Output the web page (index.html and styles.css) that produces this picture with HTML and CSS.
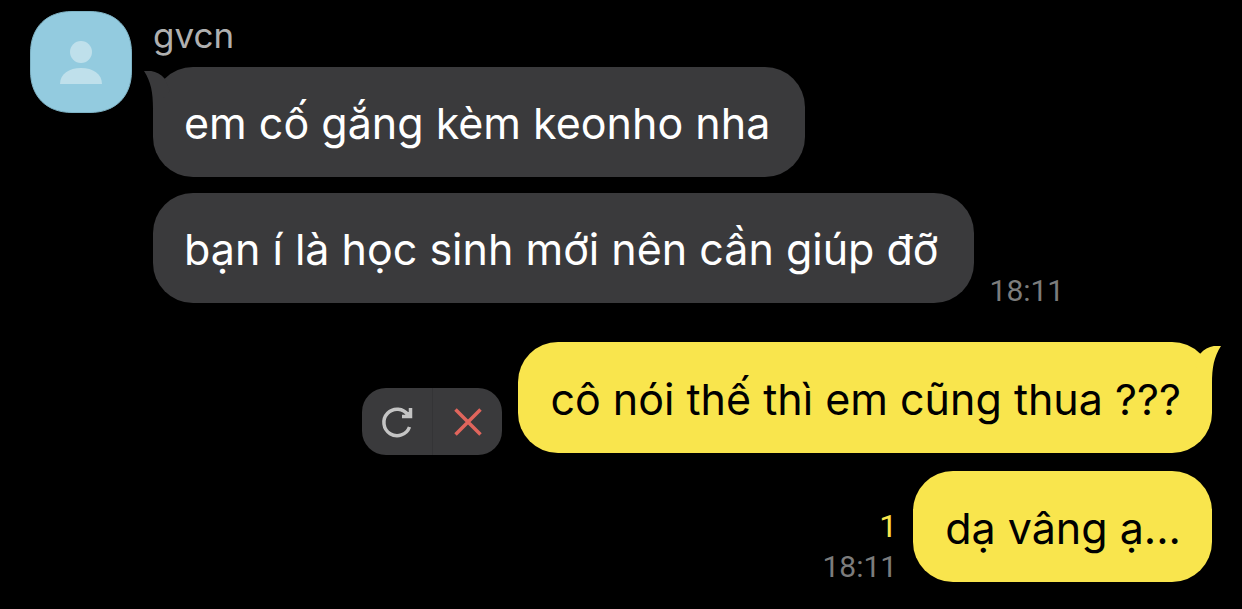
FILE: index.html
```html
<!DOCTYPE html>
<html lang="vi">
<head>
    <meta charset="UTF-8">
    <meta name="viewport" content="width=device-width, initial-scale=1.0">
    <title>gvcn</title>
    <link rel="stylesheet" href="styles.css">
</head>
<body>
    <main class="chat">
        <section class="group received">
            <svg class="avatar" viewBox="0 0 102 102" aria-hidden="true">
                <path class="avatar-bg" d="M42 .5H60C86 .5 101.5 17 101.5 42V60C101.5 85 86 101.5 60 101.5H42C16 101.5 .5 85 .5 60V42C.5 17 16 .5 42 .5Z"/>
                <circle class="avatar-person" cx="51" cy="41" r="11"/>
                <path class="avatar-person" d="M30 73C30 63 39 57 51 57S72 63 72 73Z"/>
            </svg>
            <div class="messages">
                <h2 class="sender">gvcn</h2>
                <div class="message">
                    <p class="bubble">
                        em cố gắng kèm keonho nha
                        <svg class="tail" viewBox="0 0 26 38" aria-hidden="true"><path d="M0 0C8 -1 15 1 21 8L26 20L9 38C9 21 7 11 0 0Z"/></svg>
                    </p>
                </div>
                <div class="message">
                    <p class="bubble">bạn í là học sinh mới nên cần giúp đỡ</p>
                    <div class="info"><time>18:11</time></div>
                </div>
            </div>
        </section>

        <section class="group sent">
            <div class="messages">
                <div class="message">
                    <div class="actions">
                        <button type="button" aria-label="Gửi lại">
                            <svg viewBox="0 0 34 34" aria-hidden="true">
                                <path class="retry" d="M29.5 22A13.2 13.2 0 1 1 28 10M30.5 3V11.5H22M29 7V10.5H26"/>
                            </svg>
                        </button>
                        <button type="button" aria-label="Xóa">
                            <svg viewBox="0 0 34 34" aria-hidden="true">
                                <path class="remove" d="M4.5 4.5L29.5 29.5M29.5 4.5L4.5 29.5"/>
                            </svg>
                        </button>
                    </div>
                    <p class="bubble">
                        cô nói thế thì em cũng thua ???
                        <svg class="tail" viewBox="0 0 26 38" aria-hidden="true"><path d="M26 0C18 -1 11 1 5 8L0 20L17 38C17 21 19 11 26 0Z"/></svg>
                    </p>
                </div>
                <div class="message">
                    <div class="info">
                        <span class="unread">1</span>
                        <time>18:11</time>
                    </div>
                    <p class="bubble">dạ vâng ạ...</p>
                </div>
            </div>
        </section>
    </main>
</body>
</html>
```
FILE: styles.css
```css
* {
    box-sizing: border-box;
}

body {
    margin: 0;
    background-color: #000;
    font-family: Inter, "Noto Sans", sans-serif;
}

.chat {
    display: flex;
    flex-direction: column;
    gap: 39px;
    padding: 11px 30px 27px;
}

.group {
    display: flex;
    gap: 21px;
}

.sent {
    justify-content: flex-end;
}

.avatar {
    flex: none;
    width: 102px;
    height: 102px;
}

.avatar-bg {
    fill: #93cbdf;
    stroke: #7fb3c5;
}

.avatar-person {
    fill: #bfe0eb;
}

.messages {
    display: flex;
    flex-direction: column;
    gap: 16px;
}

.sent .messages {
    align-items: flex-end;
    gap: 18px;
}

.sender {
    margin: 0;
    height: 40px;
    color: #b0b0b0;
    font-size: 35px;
    font-weight: 400;
    line-height: 48px;
}

.message {
    display: flex;
    align-items: flex-end;
    gap: 16px;
}

.bubble {
    position: relative;
    margin: 0;
    padding: 28px 35px 26px 31px;
    border-radius: 40px;
    background-color: #3a3a3c;
    color: #fff;
    font-size: 43px;
    line-height: 56px;
}

.sent .bubble {
    padding: 29px 31px 26px 32px;
    background-color: #f9e54d;
    color: #000;
}

.tail {
    position: absolute;
    top: 4px;
    left: -9px;
    width: 26px;
    height: 38px;
    fill: #3a3a3c;
}

.sent .tail {
    left: auto;
    right: -9px;
    fill: #f9e54d;
}

.info {
    display: flex;
    flex-direction: column;
    align-items: flex-end;
    color: #7c7c7c;
    font-family: Roboto, sans-serif;
    font-size: 30px;
    line-height: 24px;
}

.sent .info {
    gap: 17px;
    padding-bottom: 3px;
}

.unread {
    color: #f9e54d;
    font-size: 32px;
}

.actions {
    display: flex;
    height: 67px;
    margin-bottom: -2px;
    border-radius: 24px;
    background-color: #3a3a3c;
    overflow: hidden;
}

.actions button {
    display: flex;
    justify-content: center;
    align-items: center;
    width: 70px;
    padding: 0;
    border: none;
    background: none;
    cursor: pointer;
}

.actions button + button {
    border-left: 1px solid #343436;
}

.actions svg {
    width: 34px;
    height: 34px;
    fill: none;
    stroke-width: 3.5;
}

.retry {
    stroke: #c4c4c4;
}

.remove {
    stroke: #e0655c;
}
```
